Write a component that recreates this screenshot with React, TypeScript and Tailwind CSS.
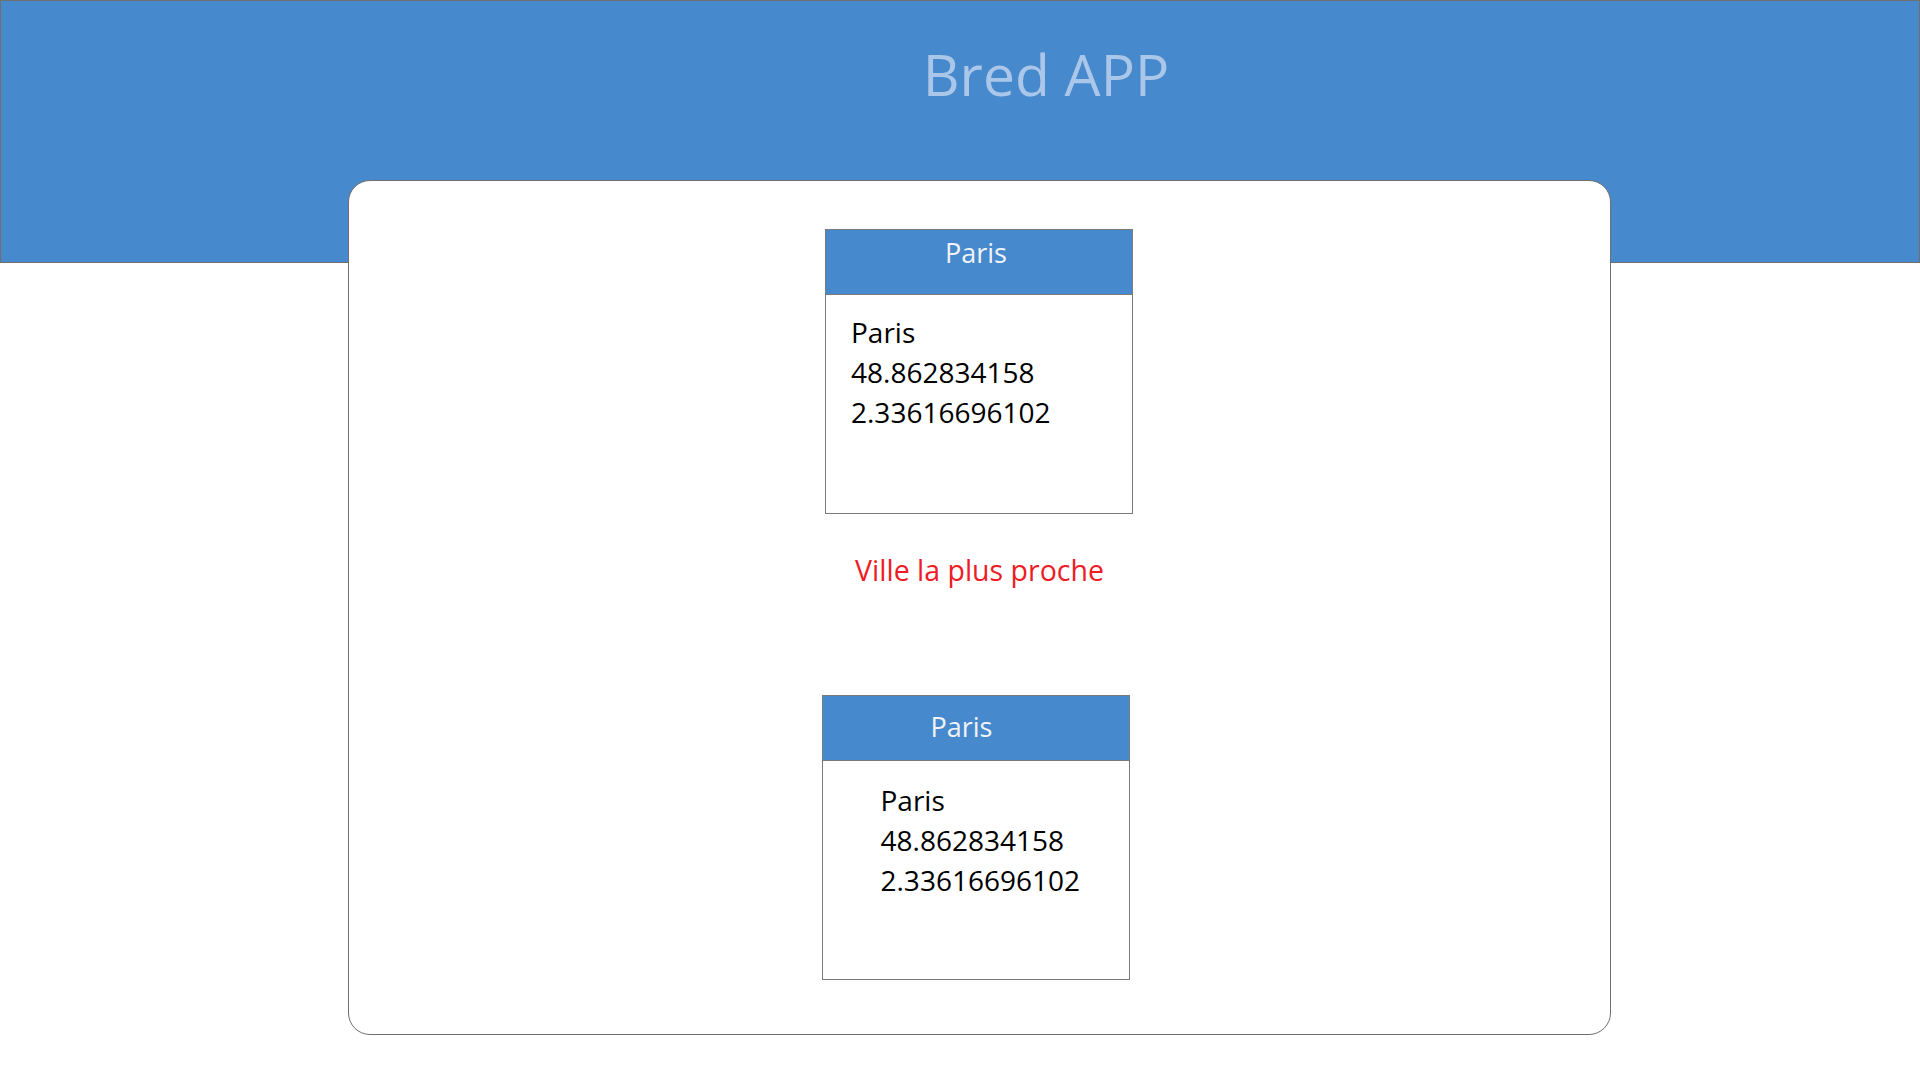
const font = { fontFamily: '"Open Sans", "Noto Sans", sans-serif' };

interface City {
    name: string;
    lat: string;
    lng: string;
}

const paris: City = { name: 'Paris', lat: '48.862834158', lng: '2.33616696102' };

function CityCard({ city, centered }: { city: City; centered?: boolean }) {
    return (
        <div className="w-[308px] h-[285px] border border-[#7a7a7a] bg-white flex flex-col">
            <div
                className={
                    centered
                        ? 'h-[65px] bg-[#4689cd] border-b border-[#7a7a7a] text-center text-[#f2f4f7] text-[27px] leading-[40px] pt-[11px] pr-[28px]'
                        : 'h-[65px] bg-[#4689cd] border-b border-[#7a7a7a] text-center text-[#f2f4f7] text-[27px] leading-[40px] pt-[3px] pr-[6px]'
                }
            >
                {city.name}
            </div>
            <div
                className={
                    centered
                        ? 'pl-[58px] pt-[19px] text-[28px] leading-[40px] text-black'
                        : 'pl-[25px] pt-[17px] text-[28px] leading-[40px] text-black'
                }
            >
                <div>{city.name}</div>
                <div>{city.lat}</div>
                <div>{city.lng}</div>
            </div>
        </div>
    );
}

export default function App() {
    return (
        <div className="min-h-screen bg-white" style={font}>
            {/* Header band */}
            <header className="h-[263px] bg-[#4689cd] border border-[#6f6f6f]">
                <h1 className="pl-[172px] pt-[37px] text-center text-[57px] leading-[72px] text-[#aac6e8] font-normal">
                    Bred APP
                </h1>
            </header>

            {/* Main card */}
            <main className="w-[1263px] ml-[348px] -mt-[83px] bg-white border border-[#6f6f6f] rounded-[22px] pt-[48px] pb-[54px] flex flex-col items-center">
                <div className="ml-[-1px]">
                    <CityCard city={paris} />
                </div>

                <p className="mt-[36px] text-[28.5px] leading-[40px] text-[#ee1c25]">Ville la plus proche</p>

                <div className="mt-[105px] mr-[8px]">
                    <CityCard city={paris} centered />
                </div>
            </main>
        </div>
    );
}
